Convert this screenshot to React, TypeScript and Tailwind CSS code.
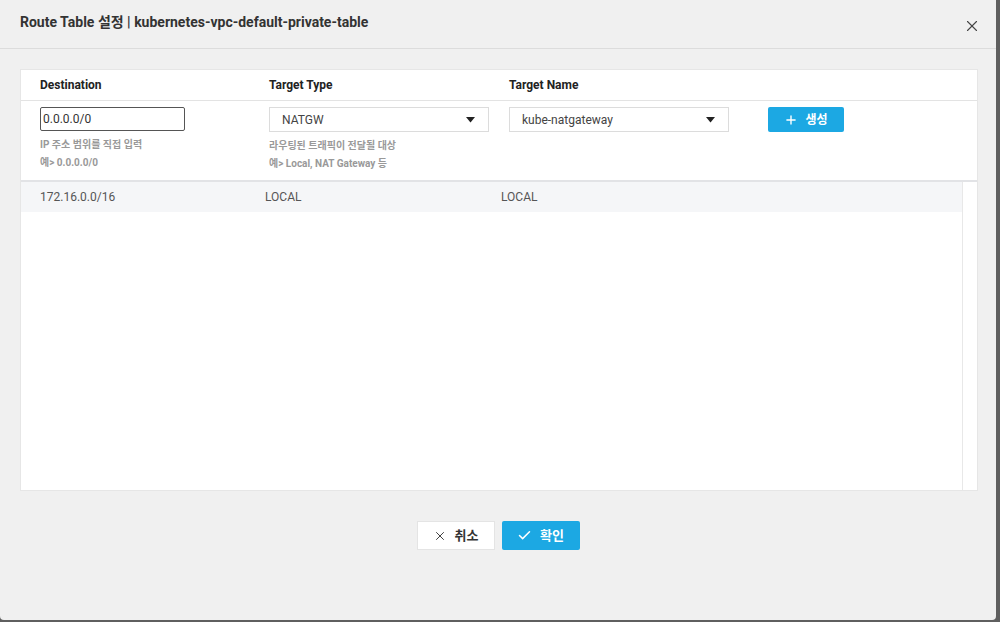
import { X, Plus, Check } from "lucide-react";

const font = { fontFamily: 'Roboto, "Noto Sans CJK KR", sans-serif' };

function Caret() {
  return (
    <svg width="9" height="6" viewBox="0 0 9 6" className="text-[#222]">
      <path d="M0 0h9L4.5 5.5z" fill="currentColor" />
    </svg>
  );
}

function Select({ value }: { value: string }) {
  return (
    <div className="flex h-[25px] w-[220px] items-center justify-between border border-[#dcdcdc] bg-white pl-[12px] pr-[13px] text-[12px] text-[#444]">
      <span>{value}</span>
      <Caret />
    </div>
  );
}

function Help({ lines }: { lines: string[] }) {
  return (
    <div className="mt-[6px] flex flex-col gap-[3px] text-[10px] font-bold leading-[15px] text-[#999]">
      {lines.map((l) => (
        <span key={l}>{l}</span>
      ))}
    </div>
  );
}

export default function App() {
  return (
    <div className="h-[622px] w-[1000px] overflow-hidden bg-[#5f5f5f]" style={font}>
      <div className="flex h-[620px] w-[996px] flex-col rounded-b-[4px] bg-[#f0f0f0]">
        {/* header */}
        <div className="flex h-[49px] shrink-0 items-center justify-between border-b border-[#dcdcdc] pl-[20px] pr-[15px]">
          <h1 className="pb-[4px] text-[14px] font-bold text-[#333]">
            Route Table 설정 | kubernetes-vpc-default-private-table
          </h1>
          <X size={18} strokeWidth={1.5} className="mt-[3px] text-[#444]" />
        </div>

        {/* body */}
        <div className="px-[20px] pt-[20px]">
          <div className="flex h-[422px] w-[958px] flex-col border border-[#e6e6e6] bg-white">
            <div className="grid h-[31px] shrink-0 grid-cols-[229px_240px_259px_1fr] items-center border-b border-[#e3e3e3] pl-[19px] text-[12px] font-bold text-[#222]">
              <span>Destination</span>
              <span>Target Type</span>
              <span>Target Name</span>
              <span />
            </div>
            <div className="grid h-[81px] shrink-0 grid-cols-[229px_240px_259px_1fr] border-b-2 border-[#e2e3e6] pl-[19px] pt-[6px]">
              <div>
                <div className="flex h-[24px] w-[145px] items-center rounded-[2px] border border-[#555] px-[2px] text-[12px] text-[#333]">
                  0.0.0.0/0
                </div>
                <Help lines={["IP 주소 범위를 직접 입력", "예> 0.0.0.0/0"]} />
              </div>
              <div>
                <Select value="NATGW" />
                <Help lines={["라우팅된 트래픽이 전달될 대상", "예> Local, NAT Gateway 등"]} />
              </div>
              <div>
                <Select value="kube-natgateway" />
              </div>
              <div>
                <button className="flex h-[25px] w-[76px] items-center justify-center gap-[7px] rounded-[2px] bg-[#1ca8e3] text-[12px] font-bold text-white">
                  <Plus size={14} strokeWidth={2.4} />
                  생성
                </button>
              </div>
            </div>
            <div className="flex min-h-0 flex-1">
              <div className="flex-1">
                <div className="grid h-[30px] grid-cols-[225px_236px_1fr] items-center bg-[#f5f6f8] pl-[19px] text-[12px] text-[#555]">
                  <span>172.16.0.0/16</span>
                  <span>LOCAL</span>
                  <span>LOCAL</span>
                </div>
              </div>
              <div className="w-[15px] border-l border-[#e8e8e8] bg-white" />
            </div>
          </div>
        </div>

        {/* footer */}
        <div className="flex justify-center gap-[7px] pt-[30px]">
          <button className="flex h-[29px] w-[78px] items-center justify-center gap-[8px] border border-[#e4e4e4] bg-white text-[13px] font-bold text-[#333]">
            <X size={14} strokeWidth={1.6} />
            취소
          </button>
          <button className="flex h-[29px] w-[78px] items-center justify-center gap-[8px] rounded-[2px] bg-[#1ca8e3] text-[13px] font-bold text-white">
            <Check size={15} strokeWidth={2.4} />
            확인
          </button>
        </div>
      </div>
    </div>
  );
}
